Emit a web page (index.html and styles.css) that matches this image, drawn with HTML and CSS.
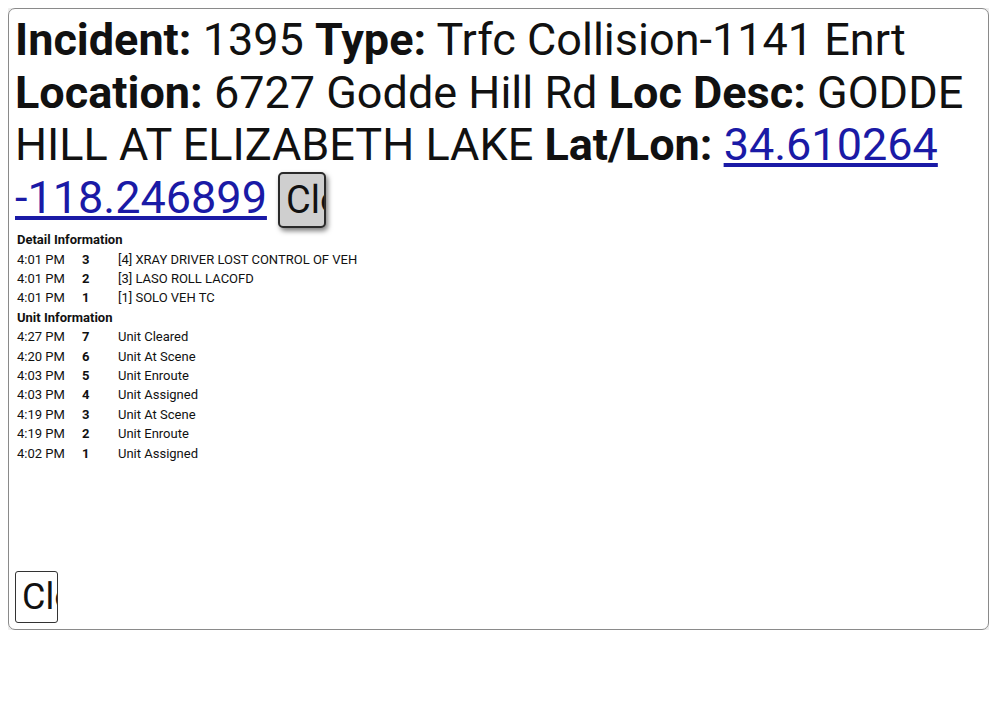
FILE: index.html
```
<!DOCTYPE html>
<html>
<head>
<meta charset="utf-8">
<link rel="stylesheet" href="styles.css">
</head>
<body>
<div class="panel">
  <div class="summary">
    <b>Incident:</b> 1395 <b>Type:</b> Trfc Collision-1141 Enrt <b>Location:</b> 6727 Godde Hill Rd <b>Loc Desc:</b> GODDE HILL AT ELIZABETH LAKE <b>Lat/Lon:</b> <a href="#" class="coords">34.610264 -118.246899</a> <button class="btn-top">Close</button>
  </div>
  <table class="log">
    <tr><th colspan="3">Detail Information</th></tr>
    <tr><td>4:01 PM</td><td class="num">3</td><td>[4] XRAY DRIVER LOST CONTROL OF VEH</td></tr>
    <tr><td>4:01 PM</td><td class="num">2</td><td>[3] LASO ROLL LACOFD</td></tr>
    <tr><td>4:01 PM</td><td class="num">1</td><td>[1] SOLO VEH TC</td></tr>
    <tr><th colspan="3">Unit Information</th></tr>
    <tr><td>4:27 PM</td><td class="num">7</td><td>Unit Cleared</td></tr>
    <tr><td>4:20 PM</td><td class="num">6</td><td>Unit At Scene</td></tr>
    <tr><td>4:03 PM</td><td class="num">5</td><td>Unit Enroute</td></tr>
    <tr><td>4:03 PM</td><td class="num">4</td><td>Unit Assigned</td></tr>
    <tr><td>4:19 PM</td><td class="num">3</td><td>Unit At Scene</td></tr>
    <tr><td>4:19 PM</td><td class="num">2</td><td>Unit Enroute</td></tr>
    <tr><td>4:02 PM</td><td class="num">1</td><td>Unit Assigned</td></tr>
  </table>
  <div class="footer">
    <button class="btn-bottom">Close</button>
  </div>
</div>
</body>
</html>
```
FILE: styles.css
```
html, body {
  background: #fff;
}
body {
  margin: 8px;
  font-family: Roboto, "Liberation Sans", sans-serif;
  color: #111;
}
.panel {
  box-sizing: border-box;
  height: 622px;
  border: 1px solid #8a8a8a;
  border-radius: 7px;
  box-shadow: 0 0 8px rgba(0, 0, 0, 0.25);
  padding: 5px 6px;
  display: flex;
  flex-direction: column;
}
.summary {
  font-size: 45px;
  line-height: 1.172;
}
.summary b {
  font-weight: 700;
}
.coords {
  color: #1a1aa6;
}
.btn-top {
  box-sizing: border-box;
  width: 48px;
  height: 56px;
  padding: 0 0 0 6px;
  font-family: Roboto, "Liberation Sans", sans-serif;
  font-size: 38px;
  text-align: left;
  overflow: hidden;
  white-space: nowrap;
  background: #cfcfcf;
  color: #111;
  border: 2px solid #2a2a2a;
  border-radius: 5px;
  box-shadow: 2px 3px 5px rgba(0, 0, 0, 0.5);
}
.log {
  margin-top: 1px;
  font-size: 13px;
  line-height: 15.4px;
  border-spacing: 2px;
}
.log th {
  text-align: left;
  font-weight: 700;
  padding: 1px 0;
}
.log td {
  padding: 1px 0;
  vertical-align: top;
}
.log td:first-child {
  width: 63px;
}
.log td.num {
  font-weight: 700;
  width: 34px;
}
.footer {
  margin-top: auto;
  padding-bottom: 1px;
}
.btn-bottom {
  box-sizing: border-box;
  width: 43px;
  height: 52px;
  padding: 0 0 0 6px;
  font-family: Roboto, "Liberation Sans", sans-serif;
  font-size: 36px;
  text-align: left;
  overflow: hidden;
  white-space: nowrap;
  background: #fff;
  color: #111;
  border: 1px solid #333;
  border-radius: 3px;
}
```
